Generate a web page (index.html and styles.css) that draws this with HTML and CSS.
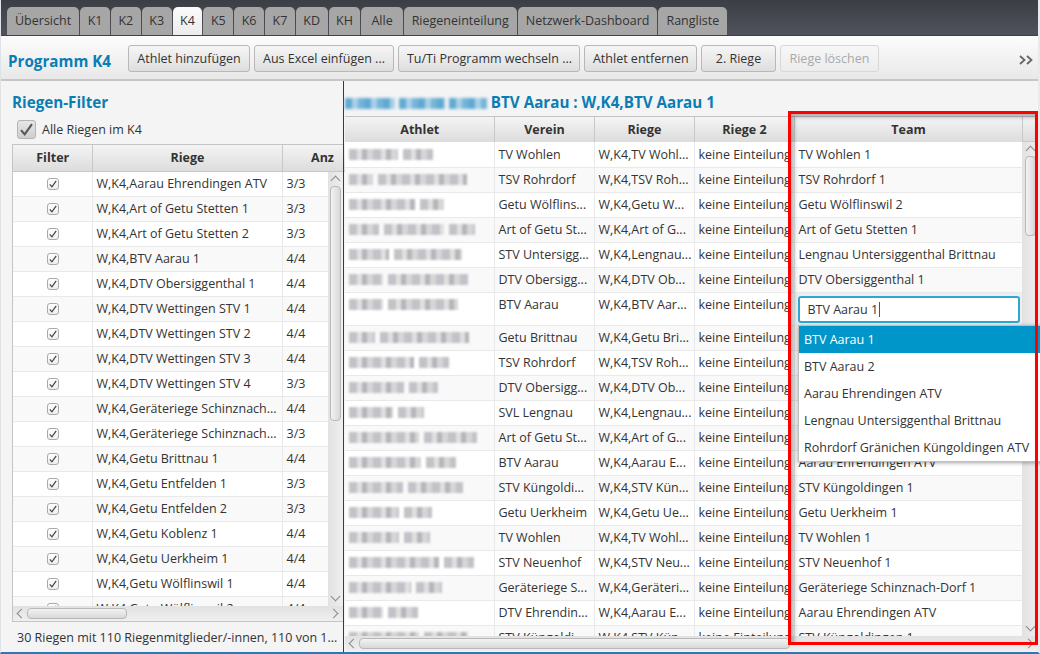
FILE: index.html
```html
<!DOCTYPE html>
<html lang="de">
<head>
<meta charset="UTF-8">
<title>Programm K4</title>
<link rel="stylesheet" href="styles.css">
</head>
<body>
<svg class="defs" width="0" height="0">
    <symbol id="check" viewBox="0 0 14 14"><path d="M2.5 7.5 L5.5 11 L11.5 2.5" fill="none" stroke-width="1.7"/></symbol>
</svg>
<div class="window">
    <div class="tabbar">
        <div class="tab">Übersicht</div>
        <div class="tab tab-k">K1</div>
        <div class="tab tab-k">K2</div>
        <div class="tab tab-k">K3</div>
        <div class="tab tab-k active">K4</div>
        <div class="tab tab-k">K5</div>
        <div class="tab tab-k">K6</div>
        <div class="tab tab-k">K7</div>
        <div class="tab tab-k">KD</div>
        <div class="tab tab-k">KH</div>
        <div class="tab tab-alle">Alle</div>
        <div class="tab">Riegeneinteilung</div>
        <div class="tab">Netzwerk-Dashboard</div>
        <div class="tab">Rangliste</div>
    </div>

    <div class="toolbar">
        <div class="toolbar-title">Programm K4</div>
        <button class="btn btn-add">Athlet hinzufügen</button>
        <button class="btn">Aus Excel einfügen ...</button>
        <button class="btn btn-switch">Tu/Ti Programm wechseln ...</button>
        <button class="btn btn-remove">Athlet entfernen</button>
        <button class="btn btn-riege">2. Riege</button>
        <button class="btn btn-delete disabled">Riege löschen</button>
        <svg class="more" width="14" height="10" viewBox="0 0 14 10"><path d="M1 1 L5.5 5 L1 9 M8 1 L12.5 5 L8 9" fill="none" stroke="#666" stroke-width="1.8"/></svg>
    </div>

    <div class="main">
        <div class="left-pane">
            <div class="heading">Riegen-Filter</div>
            <label class="all-check">
                <span class="bigbox"><svg><use href="#check"/></svg></span>
                Alle Riegen im K4
            </label>
            <div class="tableview left-table">
                <table class="head">
                    <colgroup><col class="c-filter"><col class="c-riege"><col class="c-anz"></colgroup>
                    <tr><th>Filter</th><th>Riege</th><th>Anz</th></tr>
                </table>
                <div class="body-wrap">
                    <div class="rows">
                        <table>
                            <colgroup><col class="c-filter"><col class="c-riege"><col class="c-anz"></colgroup>
                            <tr><td class="mid"><span class="box"><svg><use href="#check"/></svg></span></td><td>W,K4,Aarau Ehrendingen ATV</td><td>3/3</td></tr>
                            <tr><td class="mid"><span class="box"><svg><use href="#check"/></svg></span></td><td>W,K4,Art of Getu Stetten 1</td><td>3/3</td></tr>
                            <tr><td class="mid"><span class="box"><svg><use href="#check"/></svg></span></td><td>W,K4,Art of Getu Stetten 2</td><td>3/3</td></tr>
                            <tr><td class="mid"><span class="box"><svg><use href="#check"/></svg></span></td><td>W,K4,BTV Aarau 1</td><td>4/4</td></tr>
                            <tr><td class="mid"><span class="box"><svg><use href="#check"/></svg></span></td><td>W,K4,DTV Obersiggenthal 1</td><td>4/4</td></tr>
                            <tr><td class="mid"><span class="box"><svg><use href="#check"/></svg></span></td><td>W,K4,DTV Wettingen STV 1</td><td>4/4</td></tr>
                            <tr><td class="mid"><span class="box"><svg><use href="#check"/></svg></span></td><td>W,K4,DTV Wettingen STV 2</td><td>4/4</td></tr>
                            <tr><td class="mid"><span class="box"><svg><use href="#check"/></svg></span></td><td>W,K4,DTV Wettingen STV 3</td><td>4/4</td></tr>
                            <tr><td class="mid"><span class="box"><svg><use href="#check"/></svg></span></td><td>W,K4,DTV Wettingen STV 4</td><td>3/3</td></tr>
                            <tr><td class="mid"><span class="box"><svg><use href="#check"/></svg></span></td><td>W,K4,Geräteriege Schinznach...</td><td>4/4</td></tr>
                            <tr><td class="mid"><span class="box"><svg><use href="#check"/></svg></span></td><td>W,K4,Geräteriege Schinznach...</td><td>3/3</td></tr>
                            <tr><td class="mid"><span class="box"><svg><use href="#check"/></svg></span></td><td>W,K4,Getu Brittnau 1</td><td>4/4</td></tr>
                            <tr><td class="mid"><span class="box"><svg><use href="#check"/></svg></span></td><td>W,K4,Getu Entfelden 1</td><td>3/3</td></tr>
                            <tr><td class="mid"><span class="box"><svg><use href="#check"/></svg></span></td><td>W,K4,Getu Entfelden 2</td><td>3/3</td></tr>
                            <tr><td class="mid"><span class="box"><svg><use href="#check"/></svg></span></td><td>W,K4,Getu Koblenz 1</td><td>4/4</td></tr>
                            <tr><td class="mid"><span class="box"><svg><use href="#check"/></svg></span></td><td>W,K4,Getu Uerkheim 1</td><td>4/4</td></tr>
                            <tr><td class="mid"><span class="box"><svg><use href="#check"/></svg></span></td><td>W,K4,Getu Wölflinswil 1</td><td>4/4</td></tr>
                            <tr><td class="mid"><span class="box"><svg><use href="#check"/></svg></span></td><td>W,K4,Getu Wölflinswil 2</td><td>4/4</td></tr>
                        </table>
                    </div>
                    <div class="vbar">
                        <span class="arrow up"></span>
                        <span class="vthumb left-vthumb"></span>
                        <span class="arrow down"></span>
                    </div>
                </div>
                <div class="hbar">
                    <span class="arrow prev"></span>
                    <span class="hthumb left-hthumb"></span>
                    <span class="arrow next"></span>
                </div>
            </div>
            <div class="status">30 Riegen mit 110 Riegenmitglieder/-innen, 110 von 1...</div>
        </div>

        <div class="right-pane">
            <div class="heading right-heading">
                <span class="smear" style="width:50px"></span>
                <span class="smear" style="width:46px"></span>
                <span class="smear" style="width:38px"></span>
                BTV Aarau : W,K4,BTV Aarau 1
            </div>
            <div class="tableview right-table">
                <div class="head-row">
                    <table class="head">
                        <colgroup><col class="c-athlet"><col class="c-mid"><col class="c-mid"><col class="c-mid"><col class="c-team"></colgroup>
                        <tr><th>Athlet</th><th>Verein</th><th>Riege</th><th>Riege 2</th><th>Team</th></tr>
                    </table>
                    <div class="corner"></div>
                </div>
                <div class="body-wrap">
                    <div class="rows">
                        <table>
                            <colgroup><col class="c-athlet"><col class="c-mid"><col class="c-mid"><col class="c-mid"><col class="c-team"></colgroup>
                            <tr><td><span class="name" style="width:49px"></span><span class="name" style="width:30px"></span></td><td>TV Wohlen</td><td>W,K4,TV Wohl...</td><td>keine Einteilung</td><td>TV Wohlen 1</td></tr>
                            <tr><td><span class="name" style="width:24px"></span><span class="name" style="width:89px"></span></td><td>TSV Rohrdorf</td><td>W,K4,TSV Roh...</td><td>keine Einteilung</td><td>TSV Rohrdorf 1</td></tr>
                            <tr><td><span class="name" style="width:66px"></span><span class="name" style="width:24px"></span></td><td>Getu Wölflins...</td><td>W,K4,Getu W...</td><td>keine Einteilung</td><td>Getu Wölflinswil 2</td></tr>
                            <tr><td><span class="name" style="width:30px"></span><span class="name" style="width:60px"></span><span class="name" style="width:26px"></span></td><td>Art of Getu St...</td><td>W,K4,Art of G...</td><td>keine Einteilung</td><td>Art of Getu Stetten 1</td></tr>
                            <tr><td><span class="name" style="width:40px"></span><span class="name" style="width:68px"></span></td><td>STV Untersigg...</td><td>W,K4,Lengnau...</td><td>keine Einteilung</td><td>Lengnau Untersiggenthal Brittnau</td></tr>
                            <tr><td><span class="name" style="width:34px"></span><span class="name" style="width:80px"></span></td><td>DTV Obersigg...</td><td>W,K4,DTV Ob...</td><td>keine Einteilung</td><td>DTV Obersiggenthal 1</td></tr>
                            <tr class="edit-row"><td><span class="name" style="width:34px"></span><span class="name" style="width:70px"></span></td><td>BTV Aarau</td><td>W,K4,BTV Aar...</td><td>keine Einteilung</td><td class="edit-cell"><div class="editor">BTV Aarau 1<span class="caret"></span></div></td></tr>
                            <tr><td><span class="name" style="width:26px"></span><span class="name" style="width:89px"></span></td><td>Getu Brittnau</td><td>W,K4,Getu Bri...</td><td>keine Einteilung</td><td>Getu Brittnau 1</td></tr>
                            <tr><td><span class="name" style="width:65px"></span><span class="name" style="width:30px"></span></td><td>TSV Rohrdorf</td><td>W,K4,TSV Roh...</td><td>keine Einteilung</td><td>TSV Rohrdorf 1</td></tr>
                            <tr><td><span class="name" style="width:55px"></span><span class="name" style="width:29px"></span></td><td>DTV Obersigg...</td><td>W,K4,DTV Ob...</td><td>keine Einteilung</td><td>DTV Obersiggenthal 1</td></tr>
                            <tr><td><span class="name" style="width:44px"></span><span class="name" style="width:26px"></span></td><td>SVL Lengnau</td><td>W,K4,Lengnau...</td><td>keine Einteilung</td><td>Lengnau Untersiggenthal Brittnau</td></tr>
                            <tr><td><span class="name" style="width:70px"></span><span class="name" style="width:53px"></span></td><td>Art of Getu St...</td><td>W,K4,Art of G...</td><td>keine Einteilung</td><td>Art of Getu Stetten 2</td></tr>
                            <tr><td><span class="name" style="width:72px"></span><span class="name" style="width:30px"></span></td><td>BTV Aarau</td><td>W,K4,Aarau E...</td><td>keine Einteilung</td><td>Aarau Ehrendingen ATV</td></tr>
                            <tr><td><span class="name" style="width:54px"></span><span class="name" style="width:55px"></span></td><td>STV Küngoldi...</td><td>W,K4,STV Kün...</td><td>keine Einteilung</td><td>STV Küngoldingen 1</td></tr>
                            <tr><td><span class="name" style="width:50px"></span><span class="name" style="width:28px"></span></td><td>Getu Uerkheim</td><td>W,K4,Getu Ue...</td><td>keine Einteilung</td><td>Getu Uerkheim 1</td></tr>
                            <tr><td><span class="name" style="width:50px"></span><span class="name" style="width:26px"></span></td><td>TV Wohlen</td><td>W,K4,TV Wohl...</td><td>keine Einteilung</td><td>TV Wohlen 1</td></tr>
                            <tr><td><span class="name" style="width:90px"></span><span class="name" style="width:30px"></span></td><td>STV Neuenhof</td><td>W,K4,STV Neu...</td><td>keine Einteilung</td><td>STV Neuenhof 1</td></tr>
                            <tr><td><span class="name" style="width:62px"></span><span class="name" style="width:26px"></span></td><td>Geräteriege S...</td><td>W,K4,Geräteri...</td><td>keine Einteilung</td><td>Geräteriege Schinznach-Dorf 1</td></tr>
                            <tr><td><span class="name" style="width:34px"></span><span class="name" style="width:30px"></span></td><td>DTV Ehrendin...</td><td>W,K4,Aarau E...</td><td>keine Einteilung</td><td>Aarau Ehrendingen ATV</td></tr>
                            <tr><td><span class="name" style="width:70px"></span><span class="name" style="width:44px"></span></td><td>STV Küngoldi...</td><td>W,K4,STV Kün...</td><td>keine Einteilung</td><td>STV Küngoldingen 1</td></tr>
                        </table>
                    </div>
                    <div class="vbar">
                        <span class="arrow up"></span>
                        <span class="vthumb right-vthumb"></span>
                        <span class="arrow down"></span>
                    </div>
                </div>
                <div class="hbar">
                    <span class="arrow prev"></span>
                    <span class="hthumb right-hthumb"></span>
                    <span class="arrow next"></span>
                </div>
            </div>
        </div>
    </div>

    <ul class="popup">
        <li class="selected">BTV Aarau 1</li>
        <li>BTV Aarau 2</li>
        <li>Aarau Ehrendingen ATV</li>
        <li>Lengnau Untersiggenthal Brittnau</li>
        <li>Rohrdorf Gränichen Küngoldingen ATV</li>
    </ul>
    <div class="red-frame"></div>
</div>
</body>
</html>
```

FILE: styles.css
```css
* {
    box-sizing: border-box;
}
body {
    margin: 0;
    font-family: "Open Sans", "Noto Sans", sans-serif;
    font-size: 12.5px;
    color: #333;
    overflow: hidden;
}
.defs {
    position: absolute;
}
.window {
    position: relative;
    width: 1040px;
    height: 654px;
    display: flex;
    flex-direction: column;
    background-color: #f4f4f4;
    border-left: 1px solid #dfe3e6;
    border-right: 2px solid #e6ebef;
    border-bottom: 2px solid #2a78b5;
}

/* tabs */
.tabbar {
    height: 36px;
    flex-shrink: 0;
    display: flex;
    gap: 1px;
    padding: 7px 0 0 6px;
    background: linear-gradient(#3b3e44, #50535c);
    border-bottom: 1px solid #3f4248;
}
.tab {
    height: 28px;
    padding: 0 8px;
    line-height: 28px;
    background-color: #a6a6a6;
    border-radius: 5px 5px 0 0;
    white-space: nowrap;
}
.tab-k {
    padding: 0 7.5px;
}
.tab-alle {
    padding: 0 10px;
}
.tab.active {
    background: linear-gradient(#fafafa, #ececec);
}

/* toolbar */
.toolbar {
    height: 45px;
    flex-shrink: 0;
    display: flex;
    align-items: flex-start;
    gap: 4px;
    padding: 9px 5px 0 7px;
    background: linear-gradient(#fdfdfd, #e8e8e8);
    border-bottom: 2px solid #c6c6c6;
}
.toolbar-title {
    width: 116px;
    padding-top: 6px;
    color: #0a7db5;
    font-size: 15.2px;
    font-weight: bold;
    white-space: nowrap;
}
.btn {
    height: 27px;
    padding: 0 8px;
    font-family: inherit;
    font-size: 12.5px;
    color: #333;
    white-space: nowrap;
    background: linear-gradient(#f6f6f6, #dedede);
    border: 1px solid #b8b8b8;
    border-radius: 3px;
}
.btn-add {
    width: 122px;
}
.btn-switch {
    width: 182px;
}
.btn-remove {
    width: 113px;
}
.btn-riege {
    width: 75px;
}
.btn-delete {
    width: 99px;
}
.btn.disabled {
    color: #a9a9a9;
    background: linear-gradient(#f7f7f7, #ececec);
    border-color: #d8d8d8;
}
.more {
    margin: 10px 0 0 auto;
}

/* panes */
.main {
    flex: 1;
    min-height: 0;
    display: flex;
}
.left-pane {
    width: 342px;
    flex-shrink: 0;
    display: flex;
    flex-direction: column;
    padding-top: 11px;
}
.right-pane {
    flex: 1;
    min-width: 0;
    display: flex;
    flex-direction: column;
    padding-top: 11px;
    border-left: 1px solid #3a3a3a;
    padding-left: 1px;
}
.heading {
    height: 23px;
    padding-left: 11px;
    color: #0a7db5;
    font-size: 15.2px;
    font-weight: bold;
    white-space: nowrap;
}
.right-heading {
    height: 24px;
    padding-left: 0;
}
.smear {
    display: inline-block;
    height: 11px;
    vertical-align: -1px;
    background: repeating-linear-gradient(90deg, #5fa9d2 0 7px, #a9d0e6 7px 13px, #74b4d8 13px 19px);
    filter: blur(1.5px);
}
.all-check {
    height: 29px;
    display: flex;
    align-items: center;
    gap: 6px;
    padding-left: 16px;
}
.bigbox {
    width: 19px;
    height: 19px;
    background: linear-gradient(#e6e6e6, #cfcfcf);
    border: 1px solid #b4b4b4;
    border-radius: 3px;
}
.bigbox svg {
    display: block;
    width: 17px;
    height: 17px;
    stroke: #555;
}
.box {
    display: block;
    width: 12px;
    height: 12px;
    margin: 0 auto;
    background: linear-gradient(#fff, #eee);
    border: 1px solid #aaa;
    border-radius: 3px;
}
.box svg {
    display: block;
    width: 10px;
    height: 10px;
    stroke: #444;
}

/* table views */
.tableview {
    display: flex;
    flex-direction: column;
    border: 1px solid #c4c4c4;
    background-color: #ececec;
}
.left-table {
    height: 478px;
    margin-left: 11px;
    border-right: 0;
}
.right-table {
    height: 535px;
    border-width: 1px 0 0 0;
}
table {
    table-layout: fixed;
    border-collapse: collapse;
    border-spacing: 0;
}
.left-table table {
    width: 349px;
}
.right-table table {
    width: 677px;
    flex-shrink: 0;
}
.c-filter { width: 79px; }
.c-riege { width: 190px; }
.c-anz { width: 80px; }
.c-athlet { width: 149px; }
.c-mid { width: 100px; }
.c-team { width: 228px; }
th {
    height: 26px;
    padding: 0 0 0 1px;
    font-size: 12.5px;
    font-weight: bold;
    background: linear-gradient(#f4f4f4, #dcdcdc);
    border-right: 1px solid #c8c8c8;
    border-bottom: 1px solid #c8c8c8;
    overflow: hidden;
}
td {
    height: 25px;
    padding: 0 3px 0 4px;
    vertical-align: top;
    line-height: 24px;
    white-space: nowrap;
    overflow: hidden;
    border-right: 1px solid #e9e9e9;
    border-bottom: 1px solid #e9e9e9;
}
tr:nth-child(odd) td {
    background-color: #fff;
}
tr:nth-child(even) td {
    background-color: #f9f9f9;
}
td.mid {
    padding: 6px 0 0 1px;
}
.right-table tr:first-child td {
    padding-top: 1px;
    line-height: 23px;
}
.edit-row td {
    height: 33px;
}
.edit-row td.edit-cell {
    padding: 3px 2px 0 3px;
    background-color: #eee;
}
.editor {
    height: 27px;
    padding-left: 8px;
    line-height: 23px;
    background-color: #fff;
    border: 2px solid #30a6d2;
    border-radius: 3px;
}
.caret {
    display: inline-block;
    width: 1px;
    height: 15px;
    margin-left: 1px;
    vertical-align: -3px;
    background-color: #555;
}
.name {
    display: inline-block;
    height: 11px;
    margin-right: 5px;
    vertical-align: -1px;
    background: repeating-linear-gradient(90deg, #c3c2c8 0 8px, #e2dfdf 8px 13px, #b5b5ba 13px 18px, #d6d6d8 18px 24px);
    filter: blur(1.3px);
}
.head-row {
    display: flex;
    height: 25px;
    flex-shrink: 0;
}
.right-table th {
    height: 25px;
}
.corner {
    flex: 1;
    background: linear-gradient(#f4f4f4, #dcdcdc);
    border-bottom: 1px solid #c8c8c8;
}
.left-table .head {
    flex-shrink: 0;
}
.body-wrap {
    flex: 1;
    min-height: 0;
    display: flex;
}
.rows {
    flex: 1;
    min-width: 0;
    overflow: hidden;
    background-color: #fff;
}
.vbar {
    width: 15px;
    flex-shrink: 0;
    display: flex;
    flex-direction: column;
    align-items: center;
    background: linear-gradient(90deg, #e2e2e2, #efefef);
}
.right-table .vbar {
    width: 16px;
}
.hbar {
    height: 15px;
    flex-shrink: 0;
    display: flex;
    align-items: center;
    background: linear-gradient(#e2e2e2, #efefef);
}
.vthumb, .hthumb {
    display: block;
    background: linear-gradient(90deg, #f3f3f3, #d8d8d8);
    border: 1px solid #b8b8b8;
    border-radius: 4px;
}
.hthumb {
    height: 11px;
    background: linear-gradient(#f3f3f3, #d8d8d8);
}
.vthumb {
    width: 11px;
}
.left-vthumb { height: 235px; }
.right-vthumb { height: 80px; }
.left-hthumb { width: 100px; }
.right-hthumb { width: 431px; }
.arrow {
    display: block;
    flex-shrink: 0;
    width: 7px;
    height: 7px;
    border-top: 1px solid #8a8a8a;
    border-left: 1px solid #8a8a8a;
}
.arrow.up {
    margin: 5px 0 2px;
    transform: rotate(45deg);
}
.arrow.down {
    margin: auto 0 6px;
    transform: rotate(225deg);
}
.arrow.prev {
    margin: 0 2px 0 5px;
    transform: rotate(-45deg);
}
.arrow.next {
    margin: 0 6px 0 auto;
    transform: rotate(135deg);
}
.status {
    padding: 7px 0 0 16px;
    white-space: nowrap;
}

/* overlays */
.popup {
    position: absolute;
    left: 797px;
    top: 325px;
    width: 250px;
    margin: 0;
    padding: 0;
    list-style: none;
    background-color: #fff;
    border: 1px solid #c0c0c0;
    box-shadow: 0 1px 4px rgba(0,0,0,0.35);
}
.popup li {
    height: 27px;
    padding-left: 5px;
    line-height: 28px;
    white-space: nowrap;
}
.popup li.selected {
    color: #fff;
    background-color: #0096c9;
}
.red-frame {
    position: absolute;
    left: 787px;
    top: 111px;
    width: 250px;
    height: 534px;
    border: 3px solid #f00;
    box-shadow: inset 3px 3px 4px rgba(0,0,0,0.3);
    pointer-events: none;
}
```
